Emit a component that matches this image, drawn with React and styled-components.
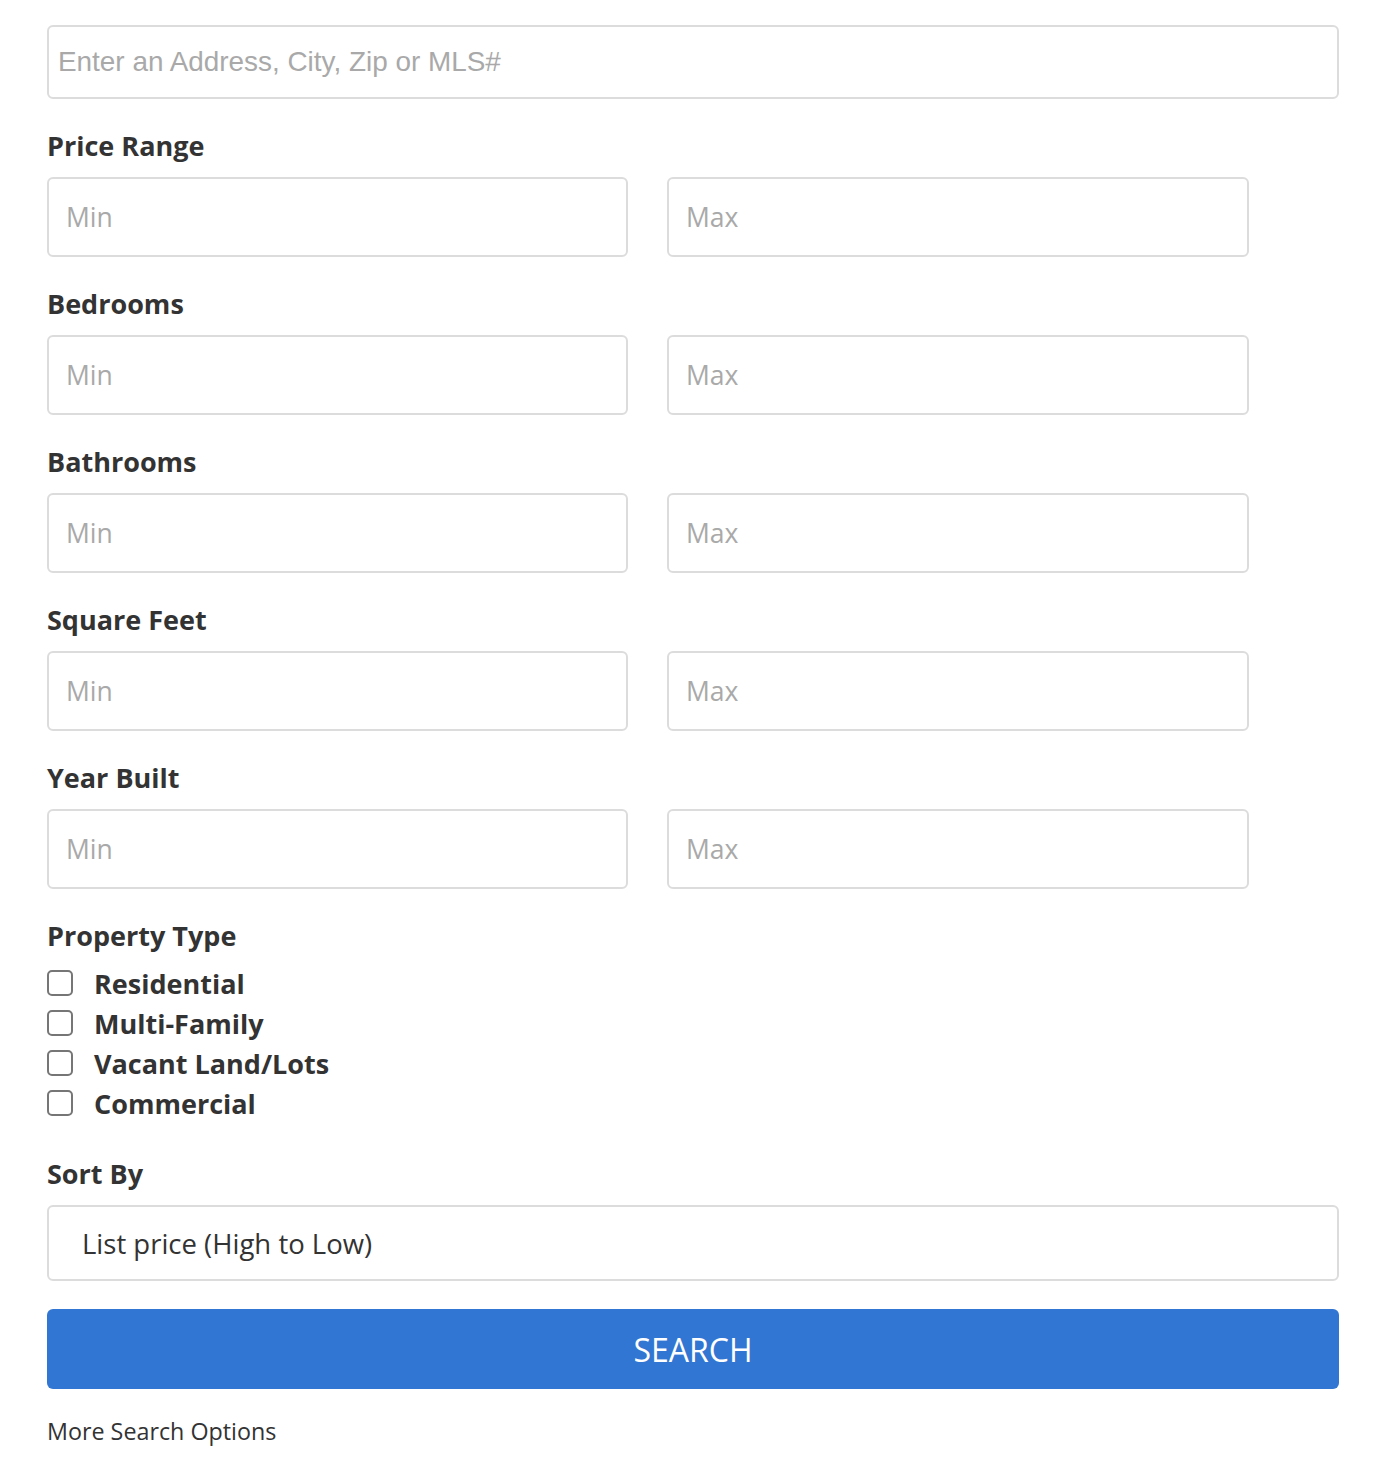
import React from "react";
import styled, { createGlobalStyle } from "styled-components";

const GlobalStyle = createGlobalStyle`
  body {
    margin: 0;
    background: #fff;
    font-family: "Open Sans", "Noto Sans", sans-serif;
    color: #333;
  }
  * {
    box-sizing: border-box;
  }
`;

const ranges = ["Price Range", "Bedrooms", "Bathrooms", "Square Feet", "Year Built"];
const types = ["Residential", "Multi-Family", "Vacant Land/Lots", "Commercial"];

const App = () => {
  return (
    <>
      <GlobalStyle />
      <Form onSubmit={(e) => e.preventDefault()}>
        <Address placeholder="Enter an Address, City, Zip or MLS#" />
        {ranges.map((title) => (
          <Section key={title}>
            <Label>{title}</Label>
            <Row>
              <RangeInput placeholder="Min" />
              <RangeInput placeholder="Max" $wide />
            </Row>
          </Section>
        ))}
        <Section>
          <Label>Property Type</Label>
          <Checks>
            {types.map((t) => (
              <Check key={t}>
                <Box type="checkbox" />
                <span>{t}</span>
              </Check>
            ))}
          </Checks>
        </Section>
        <Section $sort>
          <Label>Sort By</Label>
          <Select defaultValue="high">
            <option value="high">List price (High to Low)</option>
            <option value="low">List price (Low to High)</option>
          </Select>
        </Section>
        <Button type="submit">SEARCH</Button>
        <More href="#">More Search Options</More>
      </Form>
    </>
  );
};

const Form = styled.form`
  display: flex;
  flex-direction: column;
  align-items: flex-start;
  padding: 25px 39px 30px 47px;
`;

const Address = styled.input`
  height: 74px;
  width: 100%;
  border: 2px solid #dcdcdc;
  border-radius: 6px;
  padding: 0 9px;
  font-family: "Liberation Sans", Arial, sans-serif;
  font-size: 27.9px;
  color: #333;
  outline: none;
  &::placeholder {
    color: #a9a9a9;
  }
`;

const Section = styled.div`
  display: flex;
  flex-direction: column;
  width: 100%;
  margin-top: ${(p) => (p.$sort ? "38px" : "31px")};
`;

const Label = styled.div`
  font-size: 27px;
  font-weight: 700;
  line-height: 32px;
  color: #333;
  margin-bottom: 15px;
`;

const Row = styled.div`
  display: flex;
  gap: 39px;
`;

const RangeInput = styled.input`
  width: ${(p) => (p.$wide ? "582px" : "581px")};
  height: 80px;
  border: 2px solid #dcdcdc;
  border-radius: 6px;
  padding: 0 17px;
  font-family: "Open Sans", sans-serif;
  font-size: 26.5px;
  color: #333;
  outline: none;
  &::placeholder {
    color: #a9a9a9;
  }
`;

const Checks = styled.div`
  display: flex;
  flex-direction: column;
  gap: 6px;
  margin-top: -1px;
`;

const Check = styled.label`
  display: flex;
  align-items: center;
  gap: 21px;
  height: 34px;
  font-size: 27px;
  font-weight: 700;
  color: #333;
`;

const Box = styled.input`
  appearance: none;
  margin: 0;
  width: 26px;
  height: 26px;
  border: 2px solid #767676;
  border-radius: 5px;
  background: #fff;
`;

const Select = styled.select`
  appearance: none;
  width: 100%;
  height: 76px;
  border: 2px solid #dcdcdc;
  border-radius: 6px;
  background: #fff;
  padding: 0 33px;
  font-family: "Open Sans", sans-serif;
  font-size: 27.5px;
  color: #333;
  outline: none;
`;

const Button = styled.button`
  margin-top: 28px;
  height: 80px;
  width: 100%;
  border: none;
  border-radius: 6px;
  background: #3176d2;
  color: #fff;
  font-family: "Open Sans", sans-serif;
  font-size: 32px;
  cursor: pointer;
`;

const More = styled.a`
  margin-top: 26px;
  font-size: 23.3px;
  color: #333;
  text-decoration: none;
`;

export default App;
